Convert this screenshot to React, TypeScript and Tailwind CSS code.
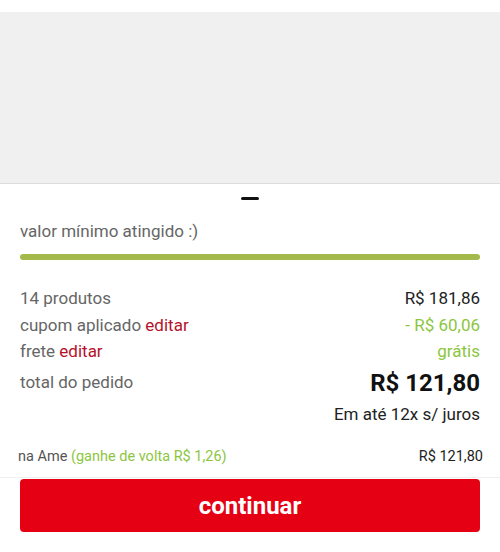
export default function App() {
  return (
    <div className="w-[500px] h-[552px] bg-white flex flex-col" style={{ fontFamily: "Roboto, 'Noto Sans', sans-serif" }}>
      <div className="h-[12px] bg-white" />
      <div className="h-[172px] bg-[#f0f0f0] border-b border-[#dcdcdc]" />
      <div className="flex justify-center pt-[13px]">
        <div className="w-[18px] h-[3px] bg-[#111] rounded-sm" />
      </div>
      <div className="px-[20px] pt-[19px] text-[17px] leading-[24px] text-[#666]">valor mínimo atingido :)</div>
      <div className="px-[20px] pt-[11px]">
        <div className="h-[6px] rounded-full bg-[#a3ba4a]" />
      </div>
      <div className="px-[20px] pt-[26px] flex flex-col text-[17px] text-[#666]">
        <div className="flex justify-between h-[26px] items-center">
          <span>14 produtos</span>
          <span className="text-[#222]">R$ 181,86</span>
        </div>
        <div className="flex justify-between h-[27px] items-center">
          <span>cupom aplicado <span className="text-[#b5122b]">editar</span></span>
          <span className="text-[#8cc63f]">- R$ 60,06</span>
        </div>
        <div className="flex justify-between h-[26px] items-center">
          <span>frete <span className="text-[#b5122b]">editar</span></span>
          <span className="text-[#8cc63f]">grátis</span>
        </div>
        <div className="flex justify-between h-[36px] items-center">
          <span>total do pedido</span>
          <span className="text-[24px] font-bold text-[#111]">R$ 121,80</span>
        </div>
        <div className="flex justify-end h-[28px] items-center text-[17px] text-[#222]">Em até 12x s/ juros</div>
      </div>
      <div className="pl-[18px] pr-[17px] pt-[13px] pb-[6px] flex justify-between text-[14.5px] h-[48px] items-center">
        <span className="text-[#555]">na Ame <span className="text-[#8cc63f]">(ganhe de volta R$ 1,26)</span></span>
        <span className="text-[#222]">R$ 121,80</span>
      </div>
      <div className="border-t border-[#eeeeee] px-[20px] pt-[1px]">
        <button className="w-full h-[53px] rounded-[4px] bg-[#e60014] text-white text-[24px] font-bold flex items-center justify-center">continuar</button>
      </div>
    </div>
  );
}
